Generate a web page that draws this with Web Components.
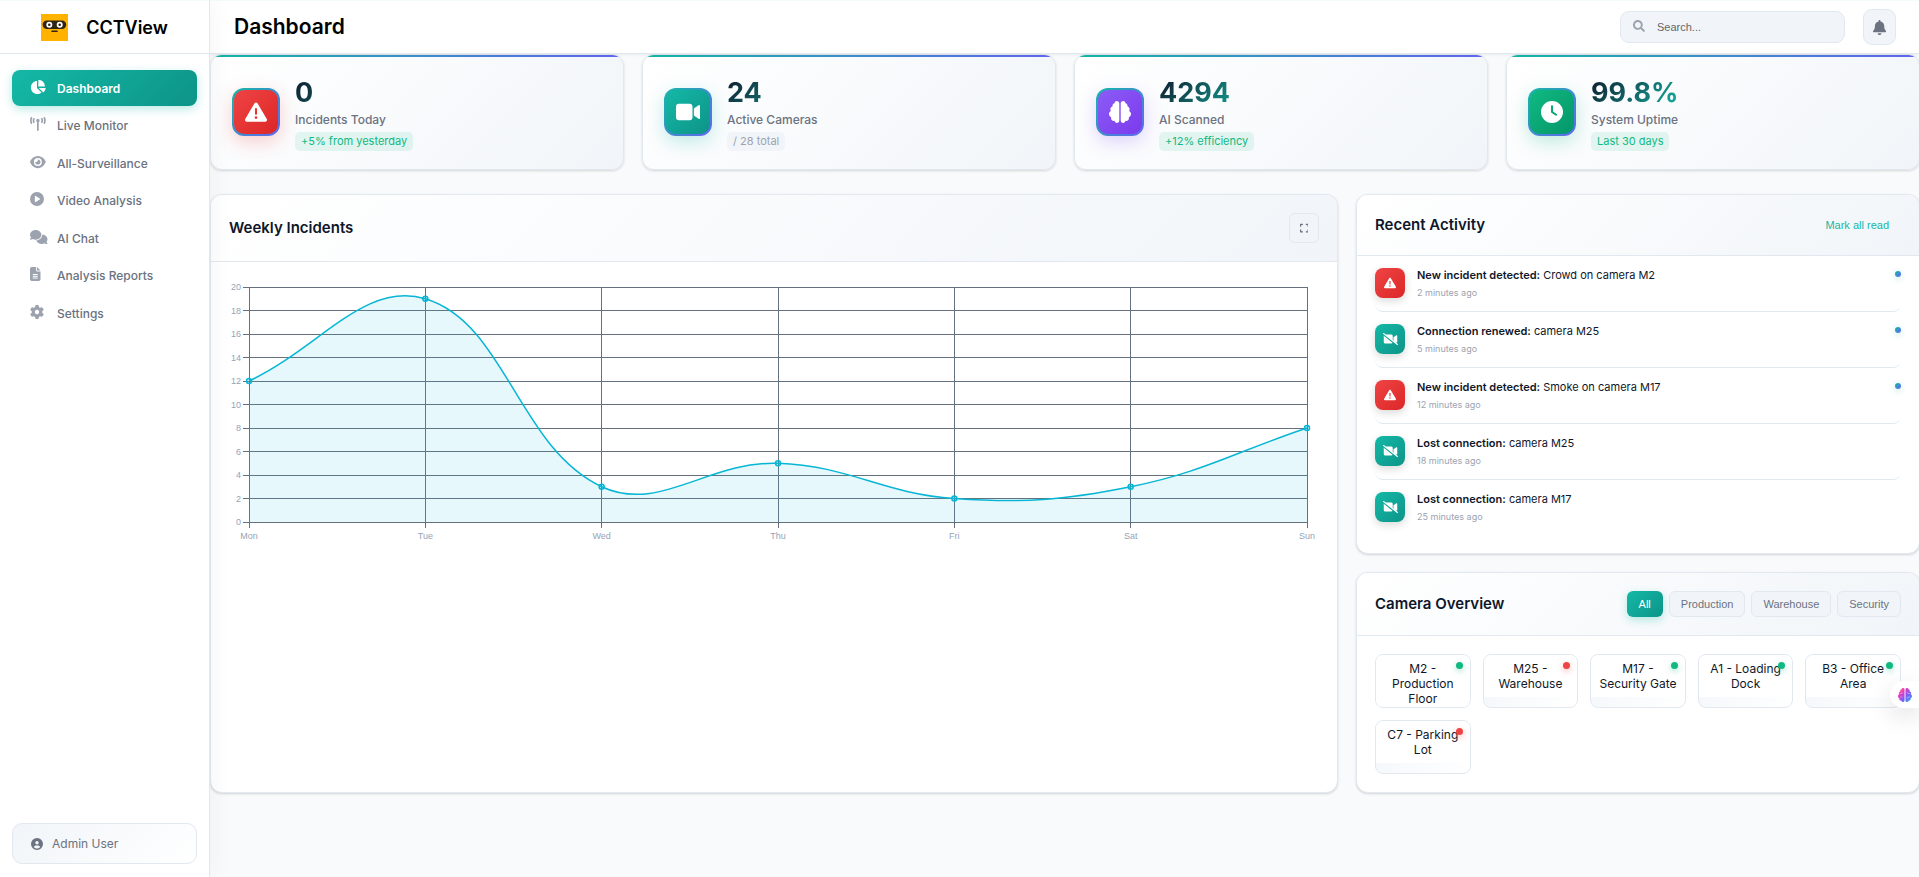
<!DOCTYPE html>
<html lang="en">
<head>
<meta charset="utf-8">
<meta name="viewport" content="width=device-width, initial-scale=1">
<title>CCTView - Dashboard</title>
<style>
  :root {
    --teal: #14b8a6;
    --teal-dark: #0d9488;
    --line: #e2e8f0;
    --ink: #0f172a;
    --muted: #6b7280;
    --faint: #9ca3af;
    --soft: #f1f5f9;
    --brand: linear-gradient(135deg, #14b8a6, #0d9488);
    --accent: linear-gradient(135deg, #14b8a6, #6366f1);
    --surface: linear-gradient(135deg, #ffffff, #f1f5f9);
    --lift: 0 1px 3px rgba(0, 0, 0, .1), 0 1px 2px rgba(0, 0, 0, .06);
  }
  body {
    margin: 0;
    background: #f8fafc;
    color: var(--ink);
    font-family: Inter, "Liberation Sans", sans-serif;
    font-size: 12px;
  }
</style>
</head>
<body>
<cv-app>
  <cv-sidebar slot="side">
    <cv-nav-item icon="pie" href="#dashboard" active>Dashboard</cv-nav-item>
    <cv-nav-item icon="tower" href="#live">Live Monitor</cv-nav-item>
    <cv-nav-item icon="eye" href="#all">All-Surveillance</cv-nav-item>
    <cv-nav-item icon="play" href="#video">Video Analysis</cv-nav-item>
    <cv-nav-item icon="comments" href="#chat">AI Chat</cv-nav-item>
    <cv-nav-item icon="file" href="#reports">Analysis Reports</cv-nav-item>
    <cv-nav-item icon="gear" href="#settings">Settings</cv-nav-item>
    <span slot="user">Admin User</span>
  </cv-sidebar>
  <cv-topbar slot="top">Dashboard</cv-topbar>

  <cv-stat slot="stats" icon="warning" tone="red"><span>0</span><span slot="label">Incidents Today</span><span slot="note">+5% from yesterday</span></cv-stat>
  <cv-stat slot="stats" icon="video" tone="teal" plain><span>24</span><span slot="label">Active Cameras</span><span slot="note">/ 28 total</span></cv-stat>
  <cv-stat slot="stats" icon="brain" tone="violet"><span>4294</span><span slot="label">AI Scanned</span><span slot="note">+12% efficiency</span></cv-stat>
  <cv-stat slot="stats" icon="clock" tone="green"><span>99.8%</span><span slot="label">System Uptime</span><span slot="note">Last 30 days</span></cv-stat>

  <cv-card slot="wide">
    <span slot="title">Weekly Incidents</span>
    <cv-button slot="actions" kind="square" icon="expand" label="Expand chart"></cv-button>
    <cv-line-chart labels="Mon,Tue,Wed,Thu,Fri,Sat,Sun" values="12,19,3,5,2,3,8"></cv-line-chart>
  </cv-card>

  <cv-card slot="narrow" flush>
    <span slot="title">Recent Activity</span>
    <cv-button slot="actions" kind="text">Mark all read</cv-button>
    <cv-activity kind="incident" unread><b>New incident detected:</b> Crowd on camera M2<span slot="time">2 minutes ago</span></cv-activity>
    <cv-activity kind="camera" unread><b>Connection renewed:</b> camera M25<span slot="time">5 minutes ago</span></cv-activity>
    <cv-activity kind="incident" unread><b>New incident detected:</b> Smoke on camera M17<span slot="time">12 minutes ago</span></cv-activity>
    <cv-activity kind="camera"><b>Lost connection:</b> camera M25<span slot="time">18 minutes ago</span></cv-activity>
    <cv-activity kind="camera" last><b>Lost connection:</b> camera M17<span slot="time">25 minutes ago</span></cv-activity>
  </cv-card>

  <cv-card slot="narrow">
    <span slot="title">Camera Overview</span>
    <cv-button slot="actions" kind="filter" active>All</cv-button>
    <cv-button slot="actions" kind="filter">Production</cv-button>
    <cv-button slot="actions" kind="filter">Warehouse</cv-button>
    <cv-button slot="actions" kind="filter">Security</cv-button>
    <cv-camera-grid>
      <cv-camera>M2 - Production Floor</cv-camera>
      <cv-camera offline>M25 - Warehouse</cv-camera>
      <cv-camera>M17 - Security Gate</cv-camera>
      <cv-camera>A1 - Loading Dock</cv-camera>
      <cv-camera>B3 - Office Area</cv-camera>
      <cv-camera offline>C7 - Parking Lot</cv-camera>
    </cv-camera-grid>
  </cv-card>
  <cv-assistant slot="float"></cv-assistant>
</cv-app>

<script>
const ICONS = {
  pie: [576, "M304 240V16.6c0-9 7-16.6 16-16.6C443.7 0 544 100.3 544 224c0 9-7.6 16-16.6 16H304zM32 272C32 150.7 122.1 50.3 239 34.3c9.2-1.3 17 6.1 17 15.4V288L412.5 444.5c6.7 6.7 6.2 17.7-1.5 23.1C371.8 495.6 323.8 512 272 512C139.5 512 32 404.6 32 272zm526.4 16c9.3 0 16.6 7.8 15.4 17c-7.7 55.9-34.6 105.6-73.9 142.3c-6 5.6-15.4 5.2-21.2-.7L320 288H558.4z"],
  tower: [576, "M80.3 44C69.8 69.9 64 98.2 64 128s5.8 58.1 16.3 84c6.6 16.4-1.3 35-17.7 41.7s-35-1.3-41.7-17.7C7.4 202.6 0 166.1 0 128S7.4 53.4 20.9 20C27.6 3.6 46.2-4.3 62.6 2.3S86.9 27.6 80.3 44zM555.1 20C568.6 53.4 576 89.9 576 128s-7.4 74.6-20.9 108c-6.6 16.4-25.3 24.3-41.7 17.7S489.1 228.4 495.7 212c10.5-25.9 16.3-54.2 16.3-84s-5.8-58.1-16.3-84C489.1 27.6 497 9 513.4 2.3s35 1.3 41.7 17.7zM352 128c0 23.7-12.9 44.4-32 55.4V480c0 17.7-14.3 32-32 32s-32-14.3-32-32V183.4c-19.1-11.1-32-31.7-32-55.4c0-35.3 28.7-64 64-64s64 28.7 64 64zM170.6 76.8C163.8 92.4 160 109.7 160 128s3.8 35.6 10.6 51.2c7.1 16.2-.3 35.1-16.5 42.1s-35.1-.3-42.1-16.5c-10.3-23.6-16-49.6-16-76.8s5.7-53.2 16-76.8c7.1-16.2 25.9-23.6 42.1-16.5s23.6 25.9 16.5 42.1zM464 51.2c10.3 23.6 16 49.6 16 76.8s-5.7 53.2-16 76.8c-7.1 16.2-25.9 23.6-42.1 16.5s-23.6-25.9-16.5-42.1c6.8-15.6 10.6-32.9 10.6-51.2s-3.8-35.6-10.6-51.2c-7.1-16.2 .3-35.1 16.5-42.1s35.1 .3 42.1 16.5z"],
  eye: [576, "M288 32c-80.8 0-145.5 36.8-192.6 80.6C48.6 156 17.3 208 2.5 243.7c-3.3 7.9-3.3 16.7 0 24.6C17.3 304 48.6 356 95.4 399.4C142.5 443.2 207.2 480 288 480s145.5-36.8 192.6-80.6c46.8-43.5 78.1-95.4 93-131.1c3.3-7.9 3.3-16.7 0-24.6c-14.9-35.7-46.2-87.7-93-131.1C433.5 68.8 368.8 32 288 32zM144 256a144 144 0 1 1 288 0 144 144 0 1 1 -288 0zm144-64c0 35.3-28.7 64-64 64c-7.1 0-13.9-1.2-20.3-3.3c-5.5-1.8-11.9 1.6-11.7 7.4c.3 6.9 1.3 13.8 3.2 20.7c13.7 51.2 66.4 81.6 117.6 67.9s81.6-66.4 67.9-117.6c-11.1-41.5-47.8-69.4-88.6-71.1c-5.8-.2-9.2 6.1-7.4 11.7c2.1 6.4 3.3 13.2 3.3 20.3z"],
  play: [512, "M0 256a256 256 0 1 1 512 0A256 256 0 1 1 0 256zM188.3 147.1c-7.6 4.2-12.3 12.3-12.3 20.9V344c0 8.7 4.7 16.7 12.3 20.9s16.8 4.1 24.3-.5l144-88c7.1-4.4 11.5-12.1 11.5-20.5s-4.4-16.1-11.5-20.5l-144-88c-7.4-4.5-16.7-4.7-24.3-.5z"],
  comments: [640, "M208 352c114.9 0 208-78.8 208-176S322.9 0 208 0S0 78.8 0 176c0 38.6 14.7 74.3 39.6 103.4c-3.5 9.4-8.7 17.7-14.2 24.7c-4.8 6.2-9.7 11-13.3 14.3c-1.8 1.6-3.3 2.9-4.3 3.7c-.5 .4-.9 .7-1.1 .8l-.2 .2C1 327.2-1.4 334.4 .8 340.9S9.1 352 16 352c21.8 0 43.8-5.6 62.1-12.5c9.2-3.5 17.8-7.4 25.2-11.4C134.1 343.3 169.8 352 208 352zM448 176c0 112.3-99.1 196.9-216.5 207C255.8 457.4 336.4 512 432 512c38.2 0 73.9-8.7 104.7-23.9c7.5 4 16 7.9 25.2 11.4c18.3 6.9 40.3 12.5 62.1 12.5c6.9 0 13.1-4.5 15.2-11.1c2.1-6.6-.2-13.8-5.8-17.9l-.2-.2c-.2-.2-.6-.4-1.1-.8c-1-.8-2.5-2-4.3-3.7c-3.6-3.3-8.5-8.1-13.3-14.3c-5.5-7-10.7-15.4-14.2-24.7c24.9-29 39.6-64.7 39.6-103.4c0-92.8-84.9-168.9-192.6-175.5c.4 5.1 .6 10.3 .6 15.5z"],
  file: [384, "M64 0C28.7 0 0 28.7 0 64V448c0 35.3 28.7 64 64 64H320c35.3 0 64-28.7 64-64V160H256c-17.7 0-32-14.3-32-32V0H64zM256 0V128H384L256 0zM112 256H272c8.8 0 16 7.2 16 16s-7.2 16-16 16H112c-8.8 0-16-7.2-16-16s7.2-16 16-16zm0 64H272c8.8 0 16 7.2 16 16s-7.2 16-16 16H112c-8.8 0-16-7.2-16-16s7.2-16 16-16zm0 64H272c8.8 0 16 7.2 16 16s-7.2 16-16 16H112c-8.8 0-16-7.2-16-16s7.2-16 16-16z"],
  gear: [512, "M495.9 166.6c3.2 8.7 .5 18.4-6.4 24.6l-43.3 39.4c1.1 8.3 1.7 16.8 1.7 25.4s-.6 17.1-1.7 25.4l43.3 39.4c6.9 6.2 9.6 15.9 6.4 24.6c-4.4 11.9-9.7 23.3-15.8 34.3l-4.7 8.1c-6.6 11-14 21.4-22.1 31.2c-5.9 7.2-15.7 9.6-24.5 6.8l-55.7-17.7c-13.4 10.3-28.2 18.9-44 25.4l-12.5 57.1c-2 9.1-9 16.3-18.2 17.8c-13.8 2.3-28 3.5-42.5 3.5s-28.7-1.2-42.5-3.5c-9.2-1.5-16.2-8.7-18.2-17.8l-12.5-57.1c-15.8-6.5-30.6-15.1-44-25.4L83.1 425.9c-8.8 2.8-18.6 .3-24.5-6.8c-8.1-9.8-15.5-20.2-22.1-31.2l-4.7-8.1c-6.1-11-11.4-22.4-15.8-34.3c-3.2-8.7-.5-18.4 6.4-24.6l43.3-39.4C64.6 273.1 64 264.6 64 256s.6-17.1 1.7-25.4L22.4 191.2c-6.9-6.2-9.6-15.9-6.4-24.6c4.4-11.9 9.7-23.3 15.8-34.3l4.7-8.1c6.6-11 14-21.4 22.1-31.2c5.9-7.2 15.7-9.6 24.5-6.8l55.7 17.7c13.4-10.3 28.2-18.9 44-25.4l12.5-57.1c2-9.1 9-16.3 18.2-17.8C227.3 1.2 241.5 0 256 0s28.7 1.2 42.5 3.5c9.2 1.5 16.2 8.7 18.2 17.8l12.5 57.1c15.8 6.5 30.6 15.1 44 25.4l55.7-17.7c8.8-2.8 18.6-.3 24.5 6.8c8.1 9.8 15.5 20.2 22.1 31.2l4.7 8.1c6.1 11 11.4 22.4 15.8 34.3zM256 336a80 80 0 1 0 0-160 80 80 0 1 0 0 160z"],
  user: [512, "M399 384.2C376.9 345.8 335.4 320 288 320H224c-47.4 0-88.9 25.8-111 64.2c35.2 39.2 86.2 63.8 143 63.8s107.8-24.7 143-63.8zM0 256a256 256 0 1 1 512 0A256 256 0 1 1 0 256zm256 16a72 72 0 1 0 0-144 72 72 0 1 0 0 144z"],
  warning: [512, "M256 32c14.2 0 27.3 7.5 34.5 19.8l216 368c7.3 12.4 7.3 27.7 .2 40.1S486.3 480 472 480H40c-14.3 0-27.6-7.7-34.7-20.1s-7-27.8 .2-40.1l216-368C228.7 39.5 241.8 32 256 32zm0 128c-13.3 0-24 10.7-24 24V296c0 13.3 10.7 24 24 24s24-10.7 24-24V184c0-13.3-10.7-24-24-24zm32 224a32 32 0 1 0 -64 0 32 32 0 1 0 64 0z"],
  video: [576, "M0 128C0 92.7 28.7 64 64 64H320c35.3 0 64 28.7 64 64V384c0 35.3-28.7 64-64 64H64c-35.3 0-64-28.7-64-64V128zM559.1 99.8c10.4 5.6 16.9 16.4 16.9 28.2V384c0 11.8-6.5 22.6-16.9 28.2s-23 5-32.9-1.6l-96-64L416 337.1V320 192 174.9l14.2-9.5 96-64c9.8-6.5 22.4-7.2 32.9-1.6z"],
  videoSlash: [640, "M38.8 5.1C28.4-3.1 13.3-1.2 5.1 9.2S-1.2 34.7 9.2 42.9l592 464c10.4 8.2 25.5 6.3 33.7-4.1s6.3-25.5-4.1-33.7l-86.4-67.7 13.8 9.2c9.8 6.5 22.4 7.2 32.9 1.6s16.9-16.4 16.9-28.2V128c0-11.8-6.5-22.6-16.9-28.2s-23-5-32.9 1.6l-96 64L448 174.9V192 320v5.8l-32-25.1V128c0-35.3-28.7-64-64-64H113.9L38.8 5.1zM407 416.7L32.3 121.5c-.2 2.1-.3 4.3-.3 6.5V384c0 35.3 28.7 64 64 64H352c23.4 0 43.9-12.6 55-31.3z"],
  brain: [512, "M184 0c30.9 0 56 25.1 56 56V456c0 30.9-25.1 56-56 56c-28.9 0-52.7-21.9-55.7-50.1c-5.2 1.4-10.7 2.1-16.3 2.1c-35.3 0-64-28.7-64-64c0-7.4 1.3-14.6 3.6-21.2C21.4 367.4 0 338.2 0 304c0-31.9 18.7-59.5 45.8-72.3C37.1 220.8 32 207 32 192c0-30.7 21.6-56.3 50.4-62.6C80.8 123.9 80 118 80 112c0-29.9 20.6-55.1 48.3-62.1C131.3 21.9 155.1 0 184 0zM328 0c28.9 0 52.6 21.9 55.7 49.9c27.8 7 48.3 32.1 48.3 62.1c0 6-.8 11.9-2.4 17.4c28.8 6.2 50.4 31.9 50.4 62.6c0 15-5.1 28.8-13.8 39.7C493.3 244.5 512 272.1 512 304c0 34.2-21.4 63.4-51.6 74.8c2.3 6.6 3.6 13.8 3.6 21.2c0 35.3-28.7 64-64 64c-5.6 0-11.1-.7-16.3-2.1c-3 28.2-26.8 50.1-55.7 50.1c-30.9 0-56-25.1-56-56V56c0-30.9 25.1-56 56-56z"],
  clock: [512, "M256 0a256 256 0 1 1 0 512A256 256 0 1 1 256 0zM232 120V256c0 8 4 15.5 10.7 20l96 64c11 7.4 25.9 4.4 33.3-6.7s4.4-25.9-6.7-33.3L280 243.2V120c0-13.3-10.7-24-24-24s-24 10.7-24 24z"],
  search: [512, "M505 442.7L405.3 343c-4.5-4.5-10.6-7-17-7H372c27.6-35.3 44-79.7 44-128C416 93.1 322.9 0 208 0S0 93.1 0 208s93.1 208 208 208c48.3 0 92.7-16.4 128-44v16.3c0 6.4 2.5 12.5 7 17l99.7 99.7c9.4 9.4 24.6 9.4 33.9 0l28.3-28.3c9.4-9.4 9.4-24.6.1-34zM208 336c-70.7 0-128-57.2-128-128 0-70.7 57.2-128 128-128 70.7 0 128 57.2 128 128 0 70.7-57.2 128-128 128z"],
  bell: [448, "M224 0c-17.7 0-32 14.3-32 32V51.2C119 66 64 130.6 64 208v18.8c0 47-17.3 92.4-48.5 127.6l-7.4 8.3c-8.4 9.4-10.4 22.9-5.3 34.4S19.4 416 32 416H416c12.6 0 24-7.4 29.2-18.9s3.1-25-5.3-34.4l-7.4-8.3C401.3 319.2 384 273.9 384 226.8V208c0-77.4-55-142-128-156.8V32c0-17.7-14.3-32-32-32zm45.3 493.3c12-12 18.7-28.3 18.7-45.3H224 160c0 17 6.7 33.3 18.7 45.3s28.3 18.7 45.3 18.7s33.3-6.7 45.3-18.7z"],
  expand: [448, "M32 32C14.3 32 0 46.3 0 64v96c0 17.7 14.3 32 32 32s32-14.3 32-32V96h64c17.7 0 32-14.3 32-32s-14.3-32-32-32H32zM64 352c0-17.7-14.3-32-32-32s-32 14.3-32 32v96c0 17.7 14.3 32 32 32h96c17.7 0 32-14.3 32-32s-14.3-32-32-32H64V352zM320 32c-17.7 0-32 14.3-32 32s14.3 32 32 32h64v64c0 17.7 14.3 32 32 32s32-14.3 32-32V64c0-17.7-14.3-32-32-32H320zM448 352c0-17.7-14.3-32-32-32s-32 14.3-32 32v64H320c-17.7 0-32 14.3-32 32s14.3 32 32 32h96c17.7 0 32-14.3 32-32V352z"]
};

/* Base class: renders the subclass template into an open shadow root. */
class Base extends HTMLElement {
  connectedCallback() {
    if (this.shadowRoot) return;
    this.attachShadow({ mode: "open" }).innerHTML =
      `<style>*{box-sizing:border-box}${this.css()}</style>${this.html()}`;
    this.ready();
  }
  css() { return ""; }
  html() { return "<slot></slot>"; }
  ready() {}
  attr(name) { return this.getAttribute(name); }
}

customElements.define("cv-icon", class extends Base {
  css() { return `:host{display:inline-flex;flex:none;color:inherit}
    svg{display:block;height:var(--icon-size,14px);fill:currentColor}`; }
  html() {
    const [w, d] = ICONS[this.attr("name")];
    return `<svg viewBox="0 0 ${w} 512" aria-hidden="true"><path d="${d}"/></svg>`;
  }
});

customElements.define("cv-app", class extends Base {
  css() { return `
    :host{display:grid;grid-template-columns:210px minmax(0,1fr);min-height:100vh;overflow-x:clip}
    .side{position:relative;z-index:2;display:grid}
    .page{display:flex;flex-direction:column;min-width:0}
    .top{position:relative;z-index:1}
    main{margin-right:-1px}
    .stats{display:grid;grid-template-columns:repeat(4,minmax(0,1fr));gap:18px;margin-bottom:24px}
    .cols{display:grid;grid-template-columns:minmax(0,2fr) minmax(0,1fr);gap:18px}
    .wide{display:grid}
    .narrow{display:flex;flex-direction:column;gap:18px}`; }
  html() { return `
    <div class="side"><slot name="side"></slot></div>
    <div class="page">
      <div class="top"><slot name="top"></slot></div>
      <main>
        <section class="stats"><slot name="stats"></slot></section>
        <section class="cols">
          <div class="wide"><slot name="wide"></slot></div>
          <div class="narrow"><slot name="narrow"></slot></div>
        </section>
      </main>
    </div>
    <slot name="float"></slot>`; }
});

customElements.define("cv-sidebar", class extends Base {
  css() { return `
    :host{display:flex;flex-direction:column;background:#fff;border-right:1px solid var(--line);
      box-shadow:4px 0 20px rgba(0,0,0,.04)}
    header{display:flex;align-items:center;justify-content:center;gap:18px;height:54px;
      border-top:1px solid #f0fdfa;border-bottom:1px solid var(--line);
      font-size:18px;font-weight:600;color:#000}
    header svg{display:block;width:27px;height:27px}
    nav{display:flex;flex-direction:column;justify-content:space-between;height:261px;margin:16px 12px}
    .user{display:flex;align-items:center;gap:9px;height:41px;margin:auto 12px 13px;padding:0 18px;
      border:1px solid var(--line);border-radius:10px;background:linear-gradient(135deg,#f1f5f9,#fff);
      color:var(--muted);font-size:12px;--icon-size:12px}`; }
  html() { return `
    <header>
      <svg viewBox="0 0 27 27" aria-hidden="true">
        <rect width="27" height="27" fill="#ffb300"/>
        <rect x="1.6" y="6.6" width="23.6" height="8.4" rx="4.2" fill="#2e2413"/>
        <circle cx="8.3" cy="10.8" r="3" fill="#fff"/><circle cx="18.7" cy="10.8" r="3" fill="#fff"/>
        <circle cx="8.3" cy="10.8" r="1.3" fill="#2e2413"/><circle cx="18.7" cy="10.8" r="1.3" fill="#2e2413"/>
        <rect x="10.3" y="16.6" width="6.4" height="1.5" rx=".7" fill="#2e2413"/>
      </svg>
      <span>CCTView</span>
    </header>
    <nav><slot></slot></nav>
    <div class="user"><cv-icon name="user"></cv-icon><slot name="user"></slot></div>`; }
});

customElements.define("cv-nav-item", class extends Base {
  css() { return `
    :host{display:block}
    a{display:grid;grid-template-columns:18px 1fr;gap:9px;align-items:center;height:36px;padding:0 18px;
      border-radius:8px;color:var(--muted);font-size:12px;font-weight:500;text-decoration:none}
    cv-icon{color:var(--faint);padding-bottom:3px}
    :host([active]) a{background:var(--brand);color:#fff;font-weight:600;box-shadow:0 3px 10px rgba(20,184,166,.3)}
    :host([active]) cv-icon{color:#fff}`; }
  html() { return `<a href="${this.attr("href")}"><cv-icon name="${this.attr("icon")}"></cv-icon><span><slot></slot></span></a>`; }
});

customElements.define("cv-topbar", class extends Base {
  css() { return `
    :host{display:flex;align-items:center;gap:18px;height:54px;padding:0 23px 0 24px;box-sizing:border-box;
      background:#fff;border-top:1px solid #f0fdfa;border-bottom:1px solid var(--line);
      box-shadow:0 1px 3px rgba(0,0,0,.06)}
    h1{margin:0 auto 0 0;font-size:21px;font-weight:600;line-height:26px;color:#000}
    label{display:flex;align-items:center;gap:12px;width:225px;height:32px;padding:0 12px;
      border:1px solid var(--line);border-radius:9px;background:var(--soft);color:var(--faint);--icon-size:12px}
    label cv-icon{padding-bottom:2px}
    input{flex:1;min-width:0;padding:0;border:0;outline:0;background:none;color:var(--ink);
      font:11px "Liberation Sans",sans-serif}
    input::placeholder{color:#666;opacity:1}
    button{display:grid;place-items:center;width:33px;height:36px;padding:0;border:1px solid var(--line);
      border-radius:9px;background:var(--soft);color:var(--muted);--icon-size:15px}`; }
  html() { return `
    <h1><slot></slot></h1>
    <label><cv-icon name="search"></cv-icon><input type="text" placeholder="Search..." aria-label="Search"></label>
    <button type="button" aria-label="Notifications"><cv-icon name="bell"></cv-icon></button>`; }
});

customElements.define("cv-stat", class extends Base {
  css() {
    const tones = {
      red: ["#ef4444, #dc2626", "239,68,68"],
      teal: ["#14b8a6, #0d9488", "20,184,166"],
      violet: ["#8b5cf6, #7c3aed", "139,92,246"],
      green: ["#10b981, #059669", "16,185,129"]
    };
    const [fill, glow] = tones[this.attr("tone")];
    return `
    :host{position:relative;display:flex;align-items:center;gap:15px;height:116px;padding:0 21px;box-sizing:border-box;
      overflow:hidden;border:1px solid var(--line);border-radius:12px;background:var(--surface);box-shadow:var(--lift)}
    .bar{position:absolute;inset:0 0 auto;height:2px;background:linear-gradient(90deg,#14b8a6,#6366f1)}
    .icon{display:grid;place-items:center;width:48px;height:48px;border:2px solid transparent;border-radius:12px;
      background:linear-gradient(135deg,${fill}) padding-box,var(--accent) border-box;color:#fff;
      box-shadow:0 6px 18px rgba(${glow},.25);--icon-size:22px}
    .text{display:flex;flex-direction:column;align-items:flex-start;padding-top:2px}
    .value{align-self:stretch;font-size:27px;font-weight:700;line-height:36px;
      background:linear-gradient(135deg,#0f172a,#14b8a6);background-clip:text;-webkit-background-clip:text;color:transparent}
    .label{margin-bottom:3px;color:var(--muted);font-size:12px;font-weight:500;line-height:18px}
    .note{padding:0 6px;border-radius:5px;background:rgba(16,185,129,.1);color:#10b981;
      font-size:11px;line-height:19px}
    :host([plain]) .note{background:var(--soft);color:var(--faint)}`;
  }
  html() { return `
    <div class="bar"></div>
    <div class="icon"><cv-icon name="${this.attr("icon")}"></cv-icon></div>
    <div class="text">
      <div class="value"><slot></slot></div>
      <div class="label"><slot name="label"></slot></div>
      <div class="note"><slot name="note"></slot></div>
    </div>`; }
});

customElements.define("cv-card", class extends Base {
  css() { return `
    :host{display:block;overflow:hidden;border:1px solid var(--line);border-radius:12px;background:#fff;
      box-shadow:var(--lift)}
    header{display:flex;align-items:center;gap:6px;padding:18px;border-bottom:1px solid var(--line);background:var(--surface)}
    h2{margin:0 auto 0 0;font-size:15px;font-weight:600;line-height:20px}
    .body{padding:18px}
    :host([flush]) .body{padding-top:0}`; }
  html() { return `
    <header><h2><slot name="title"></slot></h2><slot name="actions"></slot></header>
    <div class="body"><slot></slot></div>`; }
});

customElements.define("cv-button", class extends Base {
  css() { return `
    :host{display:flex}
    button{display:grid;place-items:center;margin:0;padding:0 11px;height:26px;border:1px solid var(--line);border-radius:6px;
      background:var(--soft);color:var(--muted);font:11px "Liberation Sans",sans-serif;white-space:nowrap}
    .square{width:30px;height:30px;padding:0;--icon-size:10px}
    .text{height:24px;border-color:transparent;background:none;color:var(--teal)}
    :host([active]) button{padding:0 12px;border:0;background:var(--brand);color:#fff;box-shadow:0 3px 8px rgba(20,184,166,.3)}`; }
  html() {
    const icon = this.attr("icon");
    const label = this.attr("label");
    return `<button type="button" class="${this.attr("kind")}"${label ? ` aria-label="${label}"` : ""}>${
      icon ? `<cv-icon name="${icon}"></cv-icon>` : "<slot></slot>"}</button>`;
  }
});

customElements.define("cv-activity", class extends Base {
  css() {
    const fill = this.attr("kind") === "incident" ? "linear-gradient(135deg,#ef4444,#dc2626)" : "var(--brand)";
    return `
    :host{display:flex;align-items:flex-start;gap:12px;height:56px;padding-top:12px;box-sizing:border-box;
      border-bottom:1px solid var(--line);border-radius:8px}
    :host([last]){height:55px;border-bottom:0}
    .icon{display:grid;place-items:center;flex:none;width:30px;height:30px;border-radius:8px;background:${fill};color:#fff;
      box-shadow:0 3px 8px rgba(0,0,0,.15);--icon-size:12px}
    .text{flex:1}
    .title{font-size:11px;line-height:14px}
    .title ::slotted(b){font-weight:600}
    .time{margin-top:5px;color:var(--faint);font-size:9px;line-height:12px}
    .dot{width:6px;height:6px;margin-top:3px;border-radius:50%;background:var(--accent);box-shadow:0 2px 6px rgba(20,184,166,.3)}`;
  }
  html() { return `
    <div class="icon"><cv-icon name="${this.attr("kind") === "incident" ? "warning" : "videoSlash"}"></cv-icon></div>
    <div class="text"><div class="title"><slot></slot></div><div class="time"><slot name="time"></slot></div></div>
    ${this.hasAttribute("unread") ? '<div class="dot"></div>' : ""}`; }
});

customElements.define("cv-camera-grid", class extends Base {
  css() { return `:host{display:grid;grid-template-columns:repeat(5,minmax(0,1fr));gap:12px}`; }
});

customElements.define("cv-camera", class extends Base {
  css() { return `
    :host{position:relative;display:block;aspect-ratio:16/9;min-height:0;overflow:hidden;box-sizing:border-box;
      border:1px solid var(--line);border-radius:8px;background:linear-gradient(135deg,#f1f5f9,#fff)}
    .name{padding:6px;background:#fff;font-size:12px;line-height:15px;text-align:center}
    .dot{position:absolute;top:7px;right:7px;width:7px;height:7px;border-radius:50%;background:#10b981;
      box-shadow:0 2px 6px rgba(16,185,129,.4)}
    :host([offline]) .dot{background:#ef4444;box-shadow:0 2px 6px rgba(239,68,68,.4)}`; }
  html() { return `<div class="name"><slot></slot></div><div class="dot"></div>`; }
});

customElements.define("cv-assistant", class extends Base {
  css() { return `
    :host{position:fixed;right:0;top:681px;z-index:3}
    button{display:grid;place-items:center;width:29px;height:27px;padding:0;border:0;border-radius:14px 0 0 14px;
      background:#fff;box-shadow:0 8px 24px rgba(0,0,0,.12)}
    svg{display:block;width:14px;height:14px}`; }
  html() { return `<button type="button" aria-label="Assistant">
    <svg viewBox="0 0 512 512" aria-hidden="true">
      <defs><linearGradient id="g" x1="0" y1="0" x2="1" y2="1">
        <stop offset="0" stop-color="#ff7a59"/><stop offset=".3" stop-color="#e93ac0"/>
        <stop offset=".6" stop-color="#7c5cf6"/><stop offset="1" stop-color="#22b8f6"/></linearGradient></defs>
      <path fill="url(#g)" d="${ICONS.brain[1]}"/>
      <path fill="none" stroke="#fff" stroke-opacity=".5" stroke-width="24" d="M60 200h90v-60M70 330h100M452 200h-90v-60M442 330H342v60"/>
    </svg></button>`; }
});

/* Filled line chart with smoothed segments; redraws when its width changes. */
customElements.define("cv-line-chart", class extends Base {
  css() { return `
    :host{display:block}
    svg{display:block;width:100%;height:274px;overflow:visible}
    text{font:9px "Liberation Sans",sans-serif;fill:#94a3b8}
    .grid{stroke:#334155;stroke-opacity:.75;fill:none;shape-rendering:crispEdges}
    .area{fill:rgba(6,182,212,.1)}
    .line{fill:none;stroke:#06b6d4;stroke-width:1.5}
    .dot{fill:rgba(6,182,212,.1);stroke:#06b6d4;stroke-width:1.5}`; }
  html() { return `<svg role="img" aria-label="Incidents per day"></svg>`; }
  ready() {
    this.draw();
    new ResizeObserver(() => this.draw()).observe(this);
  }
  draw() {
    const svg = this.shadowRoot.querySelector("svg");
    const width = this.clientWidth;
    if (!width) return;
    const labels = this.attr("labels").split(",");
    const values = this.attr("values").split(",").map(Number);
    const left = 20, right = width - 12, top = 7, bottom = 242, max = 20;
    const snap = n => Math.floor(n) + .5;
    const px = i => left + (right - left) * i / (values.length - 1);
    const py = v => bottom - (bottom - top) * v / max;
    const pts = values.map((v, i) => ({ x: px(i), y: py(v) }));
    let grid = "", text = "";
    for (let v = 0; v <= max; v += 2) {
      const y = snap(py(v));
      grid += `M${left - 6} ${y}H${right}`;
      text += `<text x="${left - 8}" y="${Math.round(py(v)) + 3}" text-anchor="end">${v}</text>`;
    }
    labels.forEach((label, i) => {
      grid += `M${snap(px(i))} ${top}V${bottom + 6}`;
      text += `<text x="${px(i)}" y="${bottom + 17}" text-anchor="middle">${label}</text>`;
    });
    const ctl = pts.map((p, i) => {
      const a = pts[i - 1] || p, b = pts[i + 1] || p;
      const d0 = Math.hypot(p.x - a.x, p.y - a.y), d1 = Math.hypot(b.x - p.x, b.y - p.y);
      const f0 = .4 * d0 / (d0 + d1), f1 = .4 * d1 / (d0 + d1);
      return [p.x - f0 * (b.x - a.x), p.y - f0 * (b.y - a.y), p.x + f1 * (b.x - a.x), p.y + f1 * (b.y - a.y)];
    });
    let line = `M${pts[0].x} ${pts[0].y}`;
    for (let i = 1; i < pts.length; i++)
      line += `C${ctl[i - 1][2]} ${ctl[i - 1][3]} ${ctl[i][0]} ${ctl[i][1]} ${pts[i].x} ${pts[i].y}`;
    svg.innerHTML = `<path class="grid" d="${grid}"/>
      <path class="area" d="${line}L${right} ${bottom}L${left} ${bottom}Z"/>
      <path class="line" d="${line}"/>
      ${pts.map(p => `<circle class="dot" cx="${p.x}" cy="${p.y}" r="2.5"/>`).join("")}${text}`;
  }
});
</script>
</body>
</html>
